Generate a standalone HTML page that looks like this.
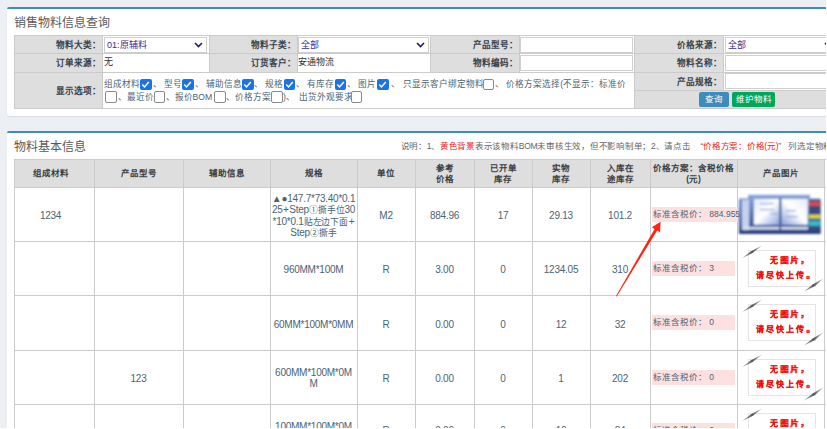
<!DOCTYPE html><html lang="zh-CN"><head><meta charset="utf-8"><style>
html,body{margin:0;padding:0;}
body{width:827px;height:429px;overflow:hidden;position:relative;background:#ecf0f5;font-family:"Liberation Sans",sans-serif;}
.t{position:absolute;white-space:nowrap;overflow:visible;}
.c{text-align:center}
.cj{font-size:8.8px;letter-spacing:-0.1px;line-height:0}
.r{text-align:right}
.lb{font-weight:bold;color:#333;font-size:8.6px;text-align:right}
.cb{position:absolute;width:10px;height:10px;border-radius:2px;box-sizing:border-box;}
.on{background:#1a73e8;}
.off{background:#fff;border:1px solid #8a8a8a;}
</style></head><body>
<div style="position:absolute;left:7px;top:7px;width:820px;height:109px;background:#fff;border-radius:3px;box-shadow:0 1px 1px rgba(0,0,0,0.08)"></div>
<div style="position:absolute;left:7px;top:7px;width:820px;height:2px;background:#3c8dbc;border-radius:3px 3px 0 0"></div>
<div class="t" style="left:14px;top:15px;width:200px;height:16px;line-height:16px;font-size:12px;color:#5a5a5a">销售物料信息查询</div>
<div style="position:absolute;left:14px;top:35px;width:88px;height:37px;background:#dedede"></div>
<div style="position:absolute;left:209px;top:35px;width:88px;height:37px;background:#dedede"></div>
<div style="position:absolute;left:430px;top:35px;width:89px;height:37px;background:#dedede"></div>
<div style="position:absolute;left:634px;top:35px;width:89px;height:37px;background:#dedede"></div>
<div style="position:absolute;left:14px;top:72px;width:88px;height:36px;background:#dedede"></div>
<div style="position:absolute;left:634px;top:72px;width:89px;height:18px;background:#dedede"></div>
<div style="position:absolute;left:634px;top:90px;width:193px;height:18px;background:#dedede"></div>
<div style="position:absolute;left:14px;top:35px;width:813px;height:1px;background:#cbcbcb"></div>
<div style="position:absolute;left:14px;top:53px;width:813px;height:1px;background:#cbcbcb"></div>
<div style="position:absolute;left:14px;top:72px;width:813px;height:1px;background:#cbcbcb"></div>
<div style="position:absolute;left:634px;top:90px;width:193px;height:1px;background:#cbcbcb"></div>
<div style="position:absolute;left:14px;top:108px;width:813px;height:1px;background:#cbcbcb"></div>
<div style="position:absolute;left:14px;top:35px;width:1px;height:37px;background:#cbcbcb"></div>
<div style="position:absolute;left:102px;top:35px;width:1px;height:37px;background:#cbcbcb"></div>
<div style="position:absolute;left:209px;top:35px;width:1px;height:37px;background:#cbcbcb"></div>
<div style="position:absolute;left:297px;top:35px;width:1px;height:37px;background:#cbcbcb"></div>
<div style="position:absolute;left:430px;top:35px;width:1px;height:37px;background:#cbcbcb"></div>
<div style="position:absolute;left:519px;top:35px;width:1px;height:37px;background:#cbcbcb"></div>
<div style="position:absolute;left:634px;top:35px;width:1px;height:37px;background:#cbcbcb"></div>
<div style="position:absolute;left:723px;top:35px;width:1px;height:37px;background:#cbcbcb"></div>
<div style="position:absolute;left:14px;top:72px;width:1px;height:36px;background:#cbcbcb"></div>
<div style="position:absolute;left:102px;top:72px;width:1px;height:36px;background:#cbcbcb"></div>
<div style="position:absolute;left:634px;top:72px;width:1px;height:36px;background:#cbcbcb"></div>
<div style="position:absolute;left:723px;top:72px;width:1px;height:18px;background:#cbcbcb"></div>
<div class="t" style="left:13px;top:36px;width:88px;height:18px;line-height:18px;font-weight:bold;color:#36434e;font-size:8.6px;text-align:right">物料大类：</div>
<div class="t" style="left:13px;top:54px;width:88px;height:18px;line-height:18px;font-weight:bold;color:#36434e;font-size:8.6px;text-align:right">订单来源：</div>
<div class="t" style="left:208px;top:36px;width:88px;height:18px;line-height:18px;font-weight:bold;color:#36434e;font-size:8.6px;text-align:right">物料子类：</div>
<div class="t" style="left:208px;top:54px;width:88px;height:18px;line-height:18px;font-weight:bold;color:#36434e;font-size:8.6px;text-align:right">订货客户：</div>
<div class="t" style="left:430px;top:36px;width:88px;height:18px;line-height:18px;font-weight:bold;color:#36434e;font-size:8.6px;text-align:right">产品型号：</div>
<div class="t" style="left:430px;top:54px;width:88px;height:18px;line-height:18px;font-weight:bold;color:#36434e;font-size:8.6px;text-align:right">物料编码：</div>
<div class="t" style="left:634px;top:36px;width:88px;height:18px;line-height:18px;font-weight:bold;color:#36434e;font-size:8.6px;text-align:right">价格来源：</div>
<div class="t" style="left:634px;top:54px;width:88px;height:18px;line-height:18px;font-weight:bold;color:#36434e;font-size:8.6px;text-align:right">物料名称：</div>
<div class="t" style="left:634px;top:73px;width:88px;height:18px;line-height:18px;font-weight:bold;color:#36434e;font-size:8.6px;text-align:right">产品规格：</div>
<div class="t" style="left:13px;top:73px;width:88px;height:36px;line-height:36px;font-weight:bold;color:#36434e;font-size:8.6px;text-align:right">显示选项：</div>
<div style="position:absolute;left:104px;top:37px;width:103px;height:16px;background:#fff;border:1px solid #cfcfcf;box-sizing:border-box"></div>
<div style="position:absolute;left:298px;top:37px;width:131px;height:16px;background:#fff;border:1px solid #cfcfcf;box-sizing:border-box"></div>
<div style="position:absolute;left:520px;top:37px;width:113px;height:16px;background:#fff;border:1px solid #cfcfcf;box-sizing:border-box"></div>
<div style="position:absolute;left:520px;top:55px;width:113px;height:16px;background:#fff;border:1px solid #cfcfcf;box-sizing:border-box"></div>
<div style="position:absolute;left:725px;top:37px;width:105px;height:16px;background:#fff;border:1px solid #cfcfcf;box-sizing:border-box"></div>
<div style="position:absolute;left:725px;top:55px;width:105px;height:16px;background:#fff;border:1px solid #cfcfcf;box-sizing:border-box"></div>
<div style="position:absolute;left:725px;top:73px;width:105px;height:16px;background:#fff;border:1px solid #cfcfcf;box-sizing:border-box"></div>
<div class="t" style="left:107px;top:38px;width:80px;height:15px;line-height:15px;font-size:9px;color:#3a2d8c">01:原辅料</div>
<div class="t" style="left:301px;top:38px;width:80px;height:15px;line-height:15px;font-size:9px;color:#3a2d8c">全部</div>
<div class="t" style="left:728px;top:38px;width:80px;height:15px;line-height:15px;font-size:9px;color:#3a2d8c">全部</div>
<svg width="9" height="6" viewBox="0 0 9 6" style="position:absolute;left:194px;top:42px"><path d="M1 1 L4.5 4.5 L8 1" fill="none" stroke="#1c1c6e" stroke-width="1.6"/></svg>
<svg width="9" height="6" viewBox="0 0 9 6" style="position:absolute;left:416px;top:42px"><path d="M1 1 L4.5 4.5 L8 1" fill="none" stroke="#1c1c6e" stroke-width="1.6"/></svg>
<svg width="9" height="6" viewBox="0 0 9 6" style="position:absolute;left:824px;top:42px"><path d="M1 1 L4.5 4.5 L8 1" fill="none" stroke="#1c1c6e" stroke-width="1.6"/></svg>
<div class="t" style="left:104px;top:53px;width:80px;height:19px;line-height:19px;font-size:9px;color:#333">无</div>
<div class="t" style="left:298px;top:53px;width:80px;height:19px;line-height:19px;font-size:9px;color:#333">安通物流</div>
<div class="t" style="left:104.4px;top:78px;height:13px;line-height:13px;font-size:8.6px;color:#4a6476">组成材料</div>
<div class="cb on" style="left:140px;top:78.5px;width:11.5px;height:11.5px"><svg width="11.5" height="11.5" style="position:absolute;left:0;top:0"><path d="M2.3 5.6 L4.5 7.9 L8.8 3" fill="none" stroke="#fff" stroke-width="1.5"/></svg></div>
<div class="t" style="left:152.5px;top:78px;height:13px;line-height:13px;font-size:8.6px;color:#4a6476">、</div>
<div class="t" style="left:164px;top:78px;height:13px;line-height:13px;font-size:8.6px;color:#4a6476">型号</div>
<div class="cb on" style="left:182.2px;top:78.5px;width:11.5px;height:11.5px"><svg width="11.5" height="11.5" style="position:absolute;left:0;top:0"><path d="M2.3 5.6 L4.5 7.9 L8.8 3" fill="none" stroke="#fff" stroke-width="1.5"/></svg></div>
<div class="t" style="left:194.5px;top:78px;height:13px;line-height:13px;font-size:8.6px;color:#4a6476">、</div>
<div class="t" style="left:205.7px;top:78px;height:13px;line-height:13px;font-size:8.6px;color:#4a6476">辅助信息</div>
<div class="cb on" style="left:242px;top:78.5px;width:11.5px;height:11.5px"><svg width="11.5" height="11.5" style="position:absolute;left:0;top:0"><path d="M2.3 5.6 L4.5 7.9 L8.8 3" fill="none" stroke="#fff" stroke-width="1.5"/></svg></div>
<div class="t" style="left:254px;top:78px;height:13px;line-height:13px;font-size:8.6px;color:#4a6476">、</div>
<div class="t" style="left:265.2px;top:78px;height:13px;line-height:13px;font-size:8.6px;color:#4a6476">规格</div>
<div class="cb on" style="left:283.8px;top:78.5px;width:11.5px;height:11.5px"><svg width="11.5" height="11.5" style="position:absolute;left:0;top:0"><path d="M2.3 5.6 L4.5 7.9 L8.8 3" fill="none" stroke="#fff" stroke-width="1.5"/></svg></div>
<div class="t" style="left:295.5px;top:78px;height:13px;line-height:13px;font-size:8.6px;color:#4a6476">、</div>
<div class="t" style="left:307.4px;top:78px;height:13px;line-height:13px;font-size:8.6px;color:#4a6476">有库存</div>
<div class="cb on" style="left:334.7px;top:78.5px;width:11.5px;height:11.5px"><svg width="11.5" height="11.5" style="position:absolute;left:0;top:0"><path d="M2.3 5.6 L4.5 7.9 L8.8 3" fill="none" stroke="#fff" stroke-width="1.5"/></svg></div>
<div class="t" style="left:346.5px;top:78px;height:13px;line-height:13px;font-size:8.6px;color:#4a6476">、</div>
<div class="t" style="left:358.2px;top:78px;height:13px;line-height:13px;font-size:8.6px;color:#4a6476">图片</div>
<div class="cb on" style="left:377px;top:78.5px;width:11.5px;height:11.5px"><svg width="11.5" height="11.5" style="position:absolute;left:0;top:0"><path d="M2.3 5.6 L4.5 7.9 L8.8 3" fill="none" stroke="#fff" stroke-width="1.5"/></svg></div>
<div class="t" style="left:391px;top:78px;height:13px;line-height:13px;font-size:8.6px;color:#4a6476">、</div>
<div class="t" style="left:402.5px;top:78px;height:13px;line-height:13px;font-size:8.6px;color:#4a6476">只显示客户绑定物料</div>
<div class="cb off" style="left:482.5px;top:78.5px;width:11.5px;height:11.5px"></div>
<div class="t" style="left:495px;top:78px;height:13px;line-height:13px;font-size:8.6px;color:#4a6476">、</div>
<div class="t" style="left:506.3px;top:78px;height:13px;line-height:13px;font-size:8.6px;color:#4a6476">价格方案选择(不显示：标准价</div>
<div class="cb off" style="left:105.3px;top:91.2px;width:11.5px;height:11.5px"></div>
<div class="t" style="left:117.5px;top:91px;height:13px;line-height:13px;font-size:8.6px;color:#4a6476">、最近价</div>
<div class="cb off" style="left:153.5px;top:91.2px;width:11.5px;height:11.5px"></div>
<div class="t" style="left:165.5px;top:91px;height:13px;line-height:13px;font-size:8.6px;color:#4a6476">、报价BOM</div>
<div class="cb off" style="left:214px;top:91.2px;width:11.5px;height:11.5px"></div>
<div class="t" style="left:225.5px;top:91px;height:13px;line-height:13px;font-size:8.6px;color:#4a6476">、价格方案</div>
<div class="cb off" style="left:271px;top:91.2px;width:11.5px;height:11.5px"></div>
<div class="t" style="left:283px;top:91px;height:13px;line-height:13px;font-size:8.6px;color:#4a6476">)、</div>
<div class="t" style="left:298.5px;top:91px;height:13px;line-height:13px;font-size:8.6px;color:#4a6476">出货外观要求</div>
<div class="cb off" style="left:350.5px;top:91.2px;width:11.5px;height:11.5px"></div>
<div style="position:absolute;left:699px;top:92px;width:30px;height:15px;background:#3c8dbc;border-radius:2px"></div>
<div class="t" style="left:699px;top:92px;width:30px;height:15px;line-height:15px;font-size:8.5px;color:#fff;text-align:center">查询</div>
<div style="position:absolute;left:732px;top:92px;width:43px;height:15px;background:#00a65a;border-radius:2px"></div>
<div class="t" style="left:732px;top:92px;width:43px;height:15px;line-height:15px;font-size:8.5px;color:#fff;text-align:center">维护物料</div>
<div style="position:absolute;left:7px;top:131px;width:820px;height:300px;background:#fff;border-radius:3px"></div>
<div style="position:absolute;left:7px;top:131px;width:820px;height:2px;background:#3c8dbc;border-radius:3px 3px 0 0"></div>
<div class="t" style="left:14px;top:139px;width:200px;height:16px;line-height:16px;font-size:12px;color:#5a5a5a">物料基本信息</div>
<div class="t" style="left:400.5px;top:140px;height:13px;line-height:13px;font-size:8.5px;letter-spacing:-0.25px;color:#666">说明：1、<span style="color:#f02020">黄色背景</span>表示该物料BOM未审核生效，但不影响制单；2、请点击<span style="display:inline-block;width:12.5px;text-align:right">“</span><span style="color:#f02020">价格方案：价格(元)</span><span style="display:inline-block;width:10px;text-align:left">”</span>列选定物料</div>
<div style="position:absolute;left:14px;top:159px;width:810px;height:28px;background:#dedede"></div>
<div style="position:absolute;left:14px;top:159px;width:812px;height:1px;background:#cbcbcb"></div>
<div style="position:absolute;left:14px;top:187px;width:812px;height:1px;background:#cbcbcb"></div>
<div style="position:absolute;left:14px;top:241px;width:812px;height:1px;background:#cbcbcb"></div>
<div style="position:absolute;left:14px;top:295px;width:812px;height:1px;background:#cbcbcb"></div>
<div style="position:absolute;left:14px;top:350px;width:812px;height:1px;background:#cbcbcb"></div>
<div style="position:absolute;left:14px;top:404px;width:812px;height:1px;background:#cbcbcb"></div>
<div style="position:absolute;left:14px;top:457px;width:812px;height:1px;background:#cbcbcb"></div>
<div style="position:absolute;left:14px;top:159px;width:1px;height:271px;background:#cbcbcb"></div>
<div style="position:absolute;left:94px;top:159px;width:1px;height:271px;background:#cbcbcb"></div>
<div style="position:absolute;left:183px;top:159px;width:1px;height:271px;background:#cbcbcb"></div>
<div style="position:absolute;left:270px;top:159px;width:1px;height:271px;background:#cbcbcb"></div>
<div style="position:absolute;left:357px;top:159px;width:1px;height:271px;background:#cbcbcb"></div>
<div style="position:absolute;left:415px;top:159px;width:1px;height:271px;background:#cbcbcb"></div>
<div style="position:absolute;left:474px;top:159px;width:1px;height:271px;background:#cbcbcb"></div>
<div style="position:absolute;left:532px;top:159px;width:1px;height:271px;background:#cbcbcb"></div>
<div style="position:absolute;left:590px;top:159px;width:1px;height:271px;background:#cbcbcb"></div>
<div style="position:absolute;left:650px;top:159px;width:1px;height:271px;background:#cbcbcb"></div>
<div style="position:absolute;left:737px;top:159px;width:1px;height:271px;background:#cbcbcb"></div>
<div style="position:absolute;left:824px;top:159px;width:1px;height:271px;background:#cbcbcb"></div>
<div class="t" style="left:10.5px;top:159px;width:80.0px;height:28px;line-height:28px;font-size:8.5px;font-weight:bold;color:#3a3f45;text-align:center">组成材料</div>
<div class="t" style="left:94px;top:159px;width:89px;height:28px;line-height:28px;font-size:8.5px;font-weight:bold;color:#3a3f45;text-align:center">产品型号</div>
<div class="t" style="left:183px;top:159px;width:87px;height:28px;line-height:28px;font-size:8.5px;font-weight:bold;color:#3a3f45;text-align:center">辅助信息</div>
<div class="t" style="left:270px;top:159px;width:87px;height:28px;line-height:28px;font-size:8.5px;font-weight:bold;color:#3a3f45;text-align:center">规格</div>
<div class="t" style="left:357px;top:159px;width:58px;height:28px;line-height:28px;font-size:8.5px;font-weight:bold;color:#3a3f45;text-align:center">单位</div>
<div class="t" style="left:415px;top:162.8px;width:59px;line-height:11.4px;font-size:8.5px;font-weight:bold;color:#3a3f45;text-align:center">参考<br>价格</div>
<div class="t" style="left:474px;top:162.8px;width:58px;line-height:11.4px;font-size:8.5px;font-weight:bold;color:#3a3f45;text-align:center">已开单<br>库存</div>
<div class="t" style="left:532px;top:162.8px;width:58px;line-height:11.4px;font-size:8.5px;font-weight:bold;color:#3a3f45;text-align:center">实物<br>库存</div>
<div class="t" style="left:590px;top:162.8px;width:60px;line-height:11.4px;font-size:8.5px;font-weight:bold;color:#3a3f45;text-align:center">入库在<br>途库存</div>
<div class="t" style="left:650px;top:162.8px;width:87px;line-height:11.4px;font-size:8.5px;font-weight:bold;color:#3a3f45;text-align:center">价格方案：含税价格<br>(元)</div>
<div class="t" style="left:737px;top:159px;width:87px;height:28px;line-height:28px;font-size:8.5px;font-weight:bold;color:#3a3f45;text-align:center">产品图片</div>
<div class="t" style="left:10.5px;top:188.5px;width:80.0px;height:54px;line-height:54px;font-size:10px;letter-spacing:-0.25px;color:#4a6476;text-align:center;">1234</div>
<div class="t" style="left:94px;top:188.5px;width:89px;height:54px;line-height:54px;font-size:10px;letter-spacing:-0.25px;color:#4a6476;text-align:center;"></div>
<div class="t" style="left:183px;top:188.5px;width:87px;height:54px;line-height:54px;font-size:10px;letter-spacing:-0.25px;color:#4a6476;text-align:center;"></div>
<div class="t" style="left:357px;top:188.5px;width:58px;height:54px;line-height:54px;font-size:10px;letter-spacing:-0.25px;color:#4a6476;text-align:center;">M2</div>
<div class="t" style="left:415px;top:188.5px;width:59px;height:54px;line-height:54px;font-size:10px;letter-spacing:-0.25px;color:#4a6476;text-align:center;">884.96</div>
<div class="t" style="left:474px;top:188.5px;width:58px;height:54px;line-height:54px;font-size:10px;letter-spacing:-0.25px;color:#4a6476;text-align:center;">17</div>
<div class="t" style="left:532px;top:188.5px;width:58px;height:54px;line-height:54px;font-size:10px;letter-spacing:-0.25px;color:#4a6476;text-align:center;">29.13</div>
<div class="t" style="left:590px;top:188.5px;width:60px;height:54px;line-height:54px;font-size:10px;letter-spacing:-0.25px;color:#4a6476;text-align:center;">101.2</div>
<div style="position:absolute;left:651.5px;top:206.5px;width:88px;height:15px;background:#fde1e1"></div>
<div class="t" style="left:653px;top:206.5px;width:90px;height:15px;line-height:15px;font-size:8.5px;color:#4a6476">标准含税价：&nbsp;884.955</div>
<div class="t" style="left:10.5px;top:242.5px;width:80.0px;height:54px;line-height:54px;font-size:10px;letter-spacing:-0.25px;color:#4a6476;text-align:center;"></div>
<div class="t" style="left:94px;top:242.5px;width:89px;height:54px;line-height:54px;font-size:10px;letter-spacing:-0.25px;color:#4a6476;text-align:center;"></div>
<div class="t" style="left:183px;top:242.5px;width:87px;height:54px;line-height:54px;font-size:10px;letter-spacing:-0.25px;color:#4a6476;text-align:center;"></div>
<div class="t" style="left:270px;top:242.5px;width:87px;height:54px;line-height:54px;font-size:10px;letter-spacing:-0.25px;color:#4a6476;text-align:center;">960MM*100M</div>
<div class="t" style="left:357px;top:242.5px;width:58px;height:54px;line-height:54px;font-size:10px;letter-spacing:-0.25px;color:#4a6476;text-align:center;">R</div>
<div class="t" style="left:415px;top:242.5px;width:59px;height:54px;line-height:54px;font-size:10px;letter-spacing:-0.25px;color:#4a6476;text-align:center;">3.00</div>
<div class="t" style="left:474px;top:242.5px;width:58px;height:54px;line-height:54px;font-size:10px;letter-spacing:-0.25px;color:#4a6476;text-align:center;">0</div>
<div class="t" style="left:532px;top:242.5px;width:58px;height:54px;line-height:54px;font-size:10px;letter-spacing:-0.25px;color:#4a6476;text-align:center;">1234.05</div>
<div class="t" style="left:590px;top:242.5px;width:60px;height:54px;line-height:54px;font-size:10px;letter-spacing:-0.25px;color:#4a6476;text-align:center;">310</div>
<div style="position:absolute;left:651.5px;top:260.5px;width:83px;height:15px;background:#fde1e1"></div>
<div class="t" style="left:653px;top:260.5px;width:90px;height:15px;line-height:15px;font-size:8.5px;color:#4a6476">标准含税价：&nbsp;3</div>
<div class="t" style="left:10.5px;top:296.5px;width:80.0px;height:55px;line-height:55px;font-size:10px;letter-spacing:-0.25px;color:#4a6476;text-align:center;"></div>
<div class="t" style="left:94px;top:296.5px;width:89px;height:55px;line-height:55px;font-size:10px;letter-spacing:-0.25px;color:#4a6476;text-align:center;"></div>
<div class="t" style="left:183px;top:296.5px;width:87px;height:55px;line-height:55px;font-size:10px;letter-spacing:-0.25px;color:#4a6476;text-align:center;"></div>
<div class="t" style="left:270px;top:296.5px;width:87px;height:55px;line-height:55px;font-size:10px;letter-spacing:-0.25px;color:#4a6476;text-align:center;">60MM*100M*0MM</div>
<div class="t" style="left:357px;top:296.5px;width:58px;height:55px;line-height:55px;font-size:10px;letter-spacing:-0.25px;color:#4a6476;text-align:center;">R</div>
<div class="t" style="left:415px;top:296.5px;width:59px;height:55px;line-height:55px;font-size:10px;letter-spacing:-0.25px;color:#4a6476;text-align:center;">0.00</div>
<div class="t" style="left:474px;top:296.5px;width:58px;height:55px;line-height:55px;font-size:10px;letter-spacing:-0.25px;color:#4a6476;text-align:center;">0</div>
<div class="t" style="left:532px;top:296.5px;width:58px;height:55px;line-height:55px;font-size:10px;letter-spacing:-0.25px;color:#4a6476;text-align:center;">12</div>
<div class="t" style="left:590px;top:296.5px;width:60px;height:55px;line-height:55px;font-size:10px;letter-spacing:-0.25px;color:#4a6476;text-align:center;">32</div>
<div style="position:absolute;left:651.5px;top:315.0px;width:83px;height:15px;background:#fde1e1"></div>
<div class="t" style="left:653px;top:315.0px;width:90px;height:15px;line-height:15px;font-size:8.5px;color:#4a6476">标准含税价：&nbsp;0</div>
<div class="t" style="left:10.5px;top:351.5px;width:80.0px;height:54px;line-height:54px;font-size:10px;letter-spacing:-0.25px;color:#4a6476;text-align:center;"></div>
<div class="t" style="left:94px;top:351.5px;width:89px;height:54px;line-height:54px;font-size:10px;letter-spacing:-0.25px;color:#4a6476;text-align:center;">123</div>
<div class="t" style="left:183px;top:351.5px;width:87px;height:54px;line-height:54px;font-size:10px;letter-spacing:-0.25px;color:#4a6476;text-align:center;"></div>
<div class="t" style="left:357px;top:351.5px;width:58px;height:54px;line-height:54px;font-size:10px;letter-spacing:-0.25px;color:#4a6476;text-align:center;">R</div>
<div class="t" style="left:415px;top:351.5px;width:59px;height:54px;line-height:54px;font-size:10px;letter-spacing:-0.25px;color:#4a6476;text-align:center;">0.00</div>
<div class="t" style="left:474px;top:351.5px;width:58px;height:54px;line-height:54px;font-size:10px;letter-spacing:-0.25px;color:#4a6476;text-align:center;">0</div>
<div class="t" style="left:532px;top:351.5px;width:58px;height:54px;line-height:54px;font-size:10px;letter-spacing:-0.25px;color:#4a6476;text-align:center;">1</div>
<div class="t" style="left:590px;top:351.5px;width:60px;height:54px;line-height:54px;font-size:10px;letter-spacing:-0.25px;color:#4a6476;text-align:center;">202</div>
<div style="position:absolute;left:651.5px;top:369.5px;width:83px;height:15px;background:#fde1e1"></div>
<div class="t" style="left:653px;top:369.5px;width:90px;height:15px;line-height:15px;font-size:8.5px;color:#4a6476">标准含税价：&nbsp;0</div>
<div class="t" style="left:10.5px;top:404px;width:80.0px;height:53px;line-height:53px;font-size:10px;letter-spacing:-0.25px;color:#4a6476;text-align:center;"></div>
<div class="t" style="left:94px;top:404px;width:89px;height:53px;line-height:53px;font-size:10px;letter-spacing:-0.25px;color:#4a6476;text-align:center;"></div>
<div class="t" style="left:183px;top:404px;width:87px;height:53px;line-height:53px;font-size:10px;letter-spacing:-0.25px;color:#4a6476;text-align:center;"></div>
<div class="t" style="left:357px;top:404px;width:58px;height:53px;line-height:53px;font-size:10px;letter-spacing:-0.25px;color:#4a6476;text-align:center;">R</div>
<div class="t" style="left:415px;top:404px;width:59px;height:53px;line-height:53px;font-size:10px;letter-spacing:-0.25px;color:#4a6476;text-align:center;">0.00</div>
<div class="t" style="left:474px;top:404px;width:58px;height:53px;line-height:53px;font-size:10px;letter-spacing:-0.25px;color:#4a6476;text-align:center;">0</div>
<div class="t" style="left:532px;top:404px;width:58px;height:53px;line-height:53px;font-size:10px;letter-spacing:-0.25px;color:#4a6476;text-align:center;">10</div>
<div class="t" style="left:590px;top:404px;width:60px;height:53px;line-height:53px;font-size:10px;letter-spacing:-0.25px;color:#4a6476;text-align:center;">84</div>
<div style="position:absolute;left:651.5px;top:423.0px;width:83px;height:15px;background:#fde1e1"></div>
<div class="t" style="left:653px;top:423.0px;width:90px;height:15px;line-height:15px;font-size:8.5px;color:#4a6476">标准含税价：&nbsp;0</div>
<div class="t" style="left:270px;top:193px;width:87px;line-height:11.3px;font-size:10px;letter-spacing:-0.25px;color:#4a6476;text-align:center">▲●147.7*73.40*0.1<br>25&#8202;+&#8202;Step<span class="cj">①撕手位</span>30<br>*10*0.1<span class="cj">贴左边下面</span>&#8202;+<br>Step<span class="cj">②撕手</span></div>
<div class="t" style="left:270px;top:367px;width:87px;line-height:11.3px;font-size:10px;letter-spacing:-0.25px;color:#4a6476;text-align:center">600MM*100M*0M<br>M</div>
<div class="t" style="left:270px;top:421px;width:87px;line-height:11.3px;font-size:10px;letter-spacing:-0.25px;color:#4a6476;text-align:center">100MM*100M*0M<br>M</div>
<svg style="position:absolute;left:736px;top:190px" width="90" height="48" viewBox="0 0 90 48">
<defs>
<linearGradient id="fr" x1="0" y1="0" x2="0" y2="1"><stop offset="0" stop-color="#7290cc"/><stop offset="0.6" stop-color="#4e6cae"/><stop offset="1" stop-color="#26397a"/></linearGradient>
<linearGradient id="cv" x1="0" y1="0" x2="0" y2="1"><stop offset="0" stop-color="#8ca6da"/><stop offset="1" stop-color="#3e5a9e"/></linearGradient>
<linearGradient id="pg" x1="0" y1="0" x2="1" y2="1"><stop offset="0" stop-color="#dfe8fa"/><stop offset="0.5" stop-color="#ffffff"/><stop offset="1" stop-color="#8fa6d8"/></linearGradient>
<linearGradient id="pg2" x1="1" y1="0" x2="0" y2="1"><stop offset="0" stop-color="#e6edfb"/><stop offset="0.5" stop-color="#ffffff"/><stop offset="1" stop-color="#8aa2d6"/></linearGradient>
<filter id="bl" x="-10%" y="-10%" width="120%" height="120%"><feGaussianBlur stdDeviation="1.0"/></filter>
</defs>
<g filter="url(#bl)">
<rect x="3" y="8.5" width="81.5" height="35.3" fill="url(#fr)"/>
<rect x="12" y="4.8" width="62" height="34" fill="url(#cv)"/>
<rect x="6" y="10" width="7" height="30" fill="#c4d2f0"/>
<rect x="8" y="37" width="64" height="2.6" fill="#d4def4"/>
<rect x="18" y="9" width="25" height="25.7" fill="url(#pg)"/>
<rect x="45.4" y="9" width="26.3" height="25.7" fill="url(#pg2)"/>
<rect x="43.2" y="8" width="2" height="35" fill="#4a64a0"/>
<rect x="3" y="40" width="81.5" height="3.8" fill="#2c417c"/>
<rect x="24" y="13" width="14" height="1.2" fill="#8ea6d4"/>
<rect x="24" y="19" width="14" height="1.2" fill="#8ea6d4"/>
<rect x="34" y="23" width="8" height="1.2" fill="#8ea6d4"/>
<rect x="50" y="20" width="10" height="1.2" fill="#8ea6d4"/>
<rect x="50" y="26" width="12" height="1.2" fill="#8ea6d4"/>
<rect x="73" y="10" width="11.5" height="30" fill="#3a4c7e"/>
<rect x="73" y="11.8" width="11.5" height="4" fill="#e04848"/>
<rect x="73" y="24.6" width="11.5" height="4" fill="#dcd83a"/>
<rect x="73" y="30.8" width="11.5" height="5" fill="#30bccc"/>
</g>
</svg>
<div style="position:absolute;left:742px;top:245px;width:82px;height:47px">
<div style="position:absolute;left:6px;top:5px;width:68px;height:37px;border:1px solid #e4e4e4;box-sizing:border-box"></div>
<svg width="82" height="47" style="position:absolute;left:0;top:0"><defs><linearGradient id="dg1" x1="0" y1="0" x2="1" y2="0"><stop offset="0" stop-color="#bbb"/><stop offset="0.5" stop-color="#555"/><stop offset="1" stop-color="#ccc"/></linearGradient></defs><polygon points="-0.2,13.4 9,6.2 20.4,0.2 11,7.8" fill="url(#dg1)"/><polygon points="61.6,46.8 71,39.2 81.6,33.2 73,41" fill="url(#dg1)"/></svg>
<div class="t" style="left:3px;top:9px;width:82px;line-height:14.5px;font-size:8px;font-weight:bold;color:#f01010;text-align:center;letter-spacing:2.1px;text-shadow:0.35px 0 0 #f01010">&nbsp;&nbsp;无图片，<br>请尽快上传。</div>
</div>
<div style="position:absolute;left:742px;top:299px;width:82px;height:47px">
<div style="position:absolute;left:6px;top:5px;width:68px;height:37px;border:1px solid #e4e4e4;box-sizing:border-box"></div>
<svg width="82" height="47" style="position:absolute;left:0;top:0"><defs><linearGradient id="dg2" x1="0" y1="0" x2="1" y2="0"><stop offset="0" stop-color="#bbb"/><stop offset="0.5" stop-color="#555"/><stop offset="1" stop-color="#ccc"/></linearGradient></defs><polygon points="-0.2,13.4 9,6.2 20.4,0.2 11,7.8" fill="url(#dg2)"/><polygon points="61.6,46.8 71,39.2 81.6,33.2 73,41" fill="url(#dg2)"/></svg>
<div class="t" style="left:3px;top:9px;width:82px;line-height:14.5px;font-size:8px;font-weight:bold;color:#f01010;text-align:center;letter-spacing:2.1px;text-shadow:0.35px 0 0 #f01010">&nbsp;&nbsp;无图片，<br>请尽快上传。</div>
</div>
<div style="position:absolute;left:742px;top:354px;width:82px;height:47px">
<div style="position:absolute;left:6px;top:5px;width:68px;height:37px;border:1px solid #e4e4e4;box-sizing:border-box"></div>
<svg width="82" height="47" style="position:absolute;left:0;top:0"><defs><linearGradient id="dg3" x1="0" y1="0" x2="1" y2="0"><stop offset="0" stop-color="#bbb"/><stop offset="0.5" stop-color="#555"/><stop offset="1" stop-color="#ccc"/></linearGradient></defs><polygon points="-0.2,13.4 9,6.2 20.4,0.2 11,7.8" fill="url(#dg3)"/><polygon points="61.6,46.8 71,39.2 81.6,33.2 73,41" fill="url(#dg3)"/></svg>
<div class="t" style="left:3px;top:9px;width:82px;line-height:14.5px;font-size:8px;font-weight:bold;color:#f01010;text-align:center;letter-spacing:2.1px;text-shadow:0.35px 0 0 #f01010">&nbsp;&nbsp;无图片，<br>请尽快上传。</div>
</div>
<div style="position:absolute;left:742px;top:408px;width:82px;height:47px">
<div style="position:absolute;left:6px;top:5px;width:68px;height:37px;border:1px solid #e4e4e4;box-sizing:border-box"></div>
<svg width="82" height="47" style="position:absolute;left:0;top:0"><defs><linearGradient id="dg4" x1="0" y1="0" x2="1" y2="0"><stop offset="0" stop-color="#bbb"/><stop offset="0.5" stop-color="#555"/><stop offset="1" stop-color="#ccc"/></linearGradient></defs><polygon points="-0.2,13.4 9,6.2 20.4,0.2 11,7.8" fill="url(#dg4)"/><polygon points="61.6,46.8 71,39.2 81.6,33.2 73,41" fill="url(#dg4)"/></svg>
<div class="t" style="left:3px;top:9px;width:82px;line-height:14.5px;font-size:8px;font-weight:bold;color:#f01010;text-align:center;letter-spacing:2.1px;text-shadow:0.35px 0 0 #f01010">&nbsp;&nbsp;无图片，<br>请尽快上传。</div>
</div>
<svg style="position:absolute;left:0;top:0" width="827" height="429"><polygon points="616.0,295.9 654.6,228.9 651.8,227.3 660.6,221.8 660.0,232.2 657.2,230.5 616.7,296.4" fill="#ff2414"/></svg>
<div style="position:absolute;left:826px;top:0px;width:1px;height:429px;background:#fff"></div>
<div style="position:absolute;left:0px;top:428px;width:827px;height:1px;background:#fff"></div>
</body></html>
